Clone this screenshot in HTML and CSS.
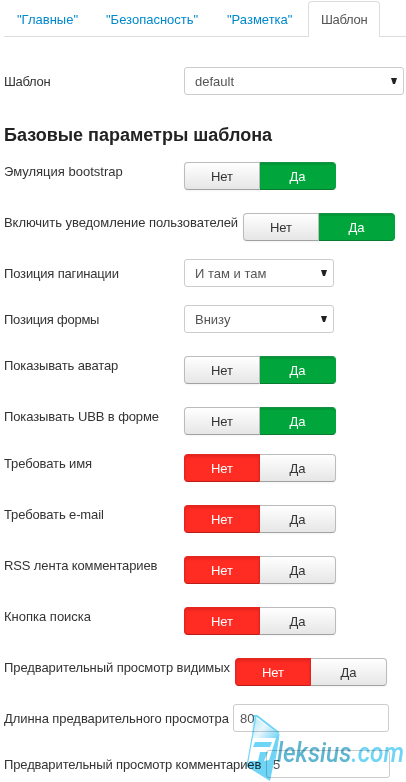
FILE: index.html
```
<!DOCTYPE html>
<html lang="ru">
<head>
<meta charset="utf-8">
<title>Шаблон</title>
<link rel="stylesheet" href="styles.css">
</head>
<body>
<nav class="tabs">
<a class="tab t1">"Главные"</a><a class="tab t2">"Безопасность"</a><a class="tab t3">"Разметка"</a><a class="tab active">Шаблон</a>
</nav>
<main class="form">
<div class="row first"><label class="low"><span class="l0">Шаблон</span></label><div class="select full"><span>default</span><svg class="arrow" viewBox="0 0 7 6"><path d="M0 0h6L4 6H2z"/></svg></div></div>
<h2>Базовые параметры шаблона</h2>
<div class="row h51"><label><span class="l1">Эмуляция bootstrap</span></label><div class="toggle"><span class="btn">Нет</span><span class="btn yes">Да</span></div></div>
<div class="row h50"><label class="w239"><span class="l2">Включить уведомление пользователей</span></label><div class="toggle"><span class="btn">Нет</span><span class="btn yes">Да</span></div></div>
<div class="row h46"><label class="low"><span class="l3">Позиция пагинации</span></label><div class="select"><span>И там и там</span><svg class="arrow" viewBox="0 0 7 6"><path d="M0 0h6L4 6H2z"/></svg></div></div>
<div class="row h47"><label class="low"><span class="l4">Позиция формы</span></label><div class="select"><span>Внизу</span><svg class="arrow" viewBox="0 0 7 6"><path d="M0 0h6L4 6H2z"/></svg></div></div>
<div class="row h51"><label><span class="l5">Показывать аватар</span></label><div class="toggle"><span class="btn">Нет</span><span class="btn yes">Да</span></div></div>
<div class="row h47"><label><span class="l6">Показывать UBB в форме</span></label><div class="toggle"><span class="btn">Нет</span><span class="btn yes">Да</span></div></div>
<div class="row h51"><label><span class="l7">Требовать имя</span></label><div class="toggle"><span class="btn no">Нет</span><span class="btn">Да</span></div></div>
<div class="row h51"><label><span class="l8">Требовать e-mail</span></label><div class="toggle"><span class="btn no">Нет</span><span class="btn">Да</span></div></div>
<div class="row h51"><label><span class="l9">RSS лента комментариев</span></label><div class="toggle"><span class="btn no">Нет</span><span class="btn">Да</span></div></div>
<div class="row h51"><label><span class="l10">Кнопка поиска</span></label><div class="toggle"><span class="btn no">Нет</span><span class="btn">Да</span></div></div>
<div class="row h50"><label class="w231"><span class="l11">Предварительный просмотр видимых</span></label><div class="toggle"><span class="btn no">Нет</span><span class="btn">Да</span></div></div>
<div class="row h46"><label class="low w229"><span class="l12">Длинна предварительного просмотра</span></label><div class="field">80</div></div>
<div class="row h32"><label class="low w262"><span class="l13">Предварительный просмотр комментариев</span></label><div class="field short">5</div></div>
</main>
<svg class="watermark" viewBox="0 0 166 72">
<defs>
<linearGradient id="fold" x1="0" y1=".2" x2="1" y2=".8"><stop offset="0" stop-color="#b5e6f7"/><stop offset=".45" stop-color="#e9f7fc"/><stop offset="1" stop-color="#7ed8f7"/></linearGradient>
</defs>
<path class="fold" d="M13 6 39 24 38 28H12z"/>
<path class="ink" d="M15 32H32L30 37H13zM11 42H28L24 51 29 50 36 28 39 24 37 38 30 71 6 56 10 51H18L20 42z"/>
<path class="line" d="M7 56 16 6M39 24 35 50"/>
<path class="edge" d="M13 6H17L39 23"/>
<text class="mark" x="37" y="52" textLength="127" lengthAdjust="spacingAndGlyphs">leksius<tspan class="domain">.com</tspan></text>
</svg>
</body>
</html>
```
FILE: styles.css
```
* { box-sizing: border-box; }
body {
  margin: 0;
  width: 406px;
  height: 782px;
  overflow: hidden;
  position: relative;
  background: #fff;
  color: #333;
  font: 13px/18px "Liberation Sans", Arial, sans-serif;
}
.tabs {
  display: flex;
  height: 37px;
  margin-left: 4px;
  padding-top: 1px;
  border-bottom: 1px solid #ddd;
}
.tab {
  flex: none;
  height: 36px;
  padding: 10px 0 0 13px;
  color: #0088cc;
  white-space: nowrap;
}
.t1 { width: 89px; }
.t2 { width: 121px; }
.t3 { width: 94px; }
.active {
  width: 72px;
  padding: 9px 0 0 12px;
  color: #555;
  background: #fff;
  border: 1px solid #ddd;
  border-bottom: 0;
  border-radius: 4px 4px 0 0;
  letter-spacing: -.3px;
}
.form { padding: 30px 0 0 4px; }
.row { display: flex; align-items: flex-start; }
.first { height: 53px; }
.h51 { height: 51px; }
.h50 { height: 50px; }
.h47 { height: 47px; }
.h46 { height: 46px; }
.h32 { height: 32px; }
label {
  flex: none;
  width: 180px;
  padding-top: 5px;
  white-space: nowrap;
}
.low { padding-top: 6px; }
.w239 { width: 239px; }
.w231 { width: 231px; }
.w229 { width: 229px; }
.w262 { width: 262px; }
.l0 { letter-spacing: -.3px; }
.l2 { letter-spacing: -.05px; }
.l3 { letter-spacing: -.17px; }
.l4 { letter-spacing: -.25px; }
.l5 { letter-spacing: -.12px; }
.l6 { letter-spacing: -.1px; }
.l7 { letter-spacing: -.12px; }
.l8 { letter-spacing: -.12px; }
.l9 { letter-spacing: -.12px; }
.l11 { letter-spacing: -.08px; }
.l12 { letter-spacing: -.07px; }
.l13 { letter-spacing: -.12px; }
h2 {
  margin: 0;
  height: 38px;
  padding-top: 5px;
  font-size: 18px;
  line-height: 20px;
  color: #222;
  white-space: nowrap;
}
.select, .field {
  flex: none;
  height: 28px;
  border: 1px solid #ccc;
  border-radius: 3px;
  color: #555;
  background: #fff;
}
.select {
  display: flex;
  align-items: flex-start;
  justify-content: space-between;
  width: 150px;
  padding: 5px 5px 0 10px;
}
.full { width: 220px; }
.field { width: 156px; padding: 5px 6px 0; }
.short { width: 124px; }
.arrow { width: 7px; height: 6px; margin-top: 5px; fill: #222; }
.toggle { display: flex; margin-top: 4px; }
.btn {
  width: 76px;
  height: 28px;
  padding-top: 5px;
  border: 1px solid #bbb;
  border-bottom-color: #a2a2a2;
  background: linear-gradient(#fff, #e6e6e6);
  box-shadow: 0 1px 2px rgba(0, 0, 0, .05);
  line-height: 18px;
  text-align: center;
}
.btn:first-child { border-radius: 4px 0 0 4px; }
.btn:last-child { border-radius: 0 4px 4px 0; border-left: 0; }
.btn.yes {
  color: #fff;
  background: #00a53c;
  border-color: #159044 #00a53c #087b30;
  box-shadow: inset 0 2px 1px rgba(0, 70, 20, .15);
}
.btn.no {
  color: #fff;
  background: #ff2c24;
  border-color: #e2251e #e2251e #b91d18;
  box-shadow: inset 0 2px 3px rgba(120, 0, 0, .2);
}
.watermark {
  position: absolute;
  left: 240px;
  top: 710px;
  width: 166px;
  height: 72px;
  mix-blend-mode: multiply;
}
.fold { fill: url(#fold); }
.ink { fill: #6fd5f7; }
.line { fill: none; stroke: #70d4f6; stroke-width: 1.2; }
.edge { fill: none; stroke: #70d4f6; stroke-width: 2; }
.mark {
  font: italic 500 27px Roboto, sans-serif;
  fill: #5fb5d0;
}
.domain { fill: #6fd5f7; }
```
